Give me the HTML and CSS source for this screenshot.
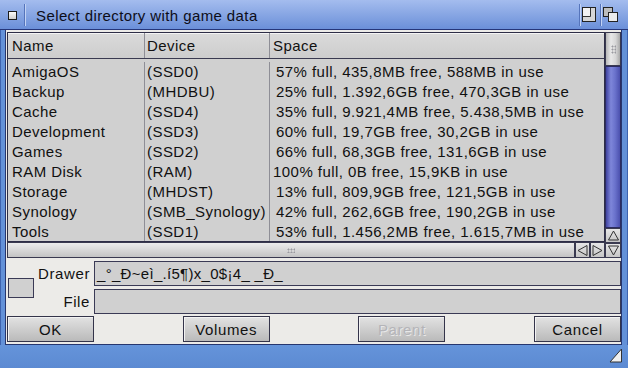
FILE: index.html
```html
<!DOCTYPE html>
<html lang="en">
<head>
  <meta charset="UTF-8" />
  <title>Select directory with game data</title>
  <link rel="stylesheet" href="styles.css">
</head>
<body>

  <div class="window">
    <div class="titlebar">
      <span class="closebox"></span>
      <span class="title-sep sep-left"></span>
      <span class="title">Select directory with game data</span>
      <span class="title-sep"></span>
      <svg class="gadget zoom" width="14" height="15" viewBox="0 0 14 15">
        <rect x="0.5" y="0.5" width="13" height="14" fill="#d6d6d6" stroke="#222"/>
        <rect x="1" y="1" width="7.5" height="8" fill="#f2f2f2"/>
        <path d="M8.5 1 V9.5 H1" fill="none" stroke="#333"/>
      </svg>
      <span class="title-sep sep-depth"></span>
      <svg class="gadget depth" width="15" height="15" viewBox="0 0 15 15">
        <rect x="0.5" y="0.5" width="9" height="9" fill="#bdbdbd" stroke="#222"/>
        <rect x="5.5" y="5.5" width="9" height="9" fill="#ececec" stroke="#222"/>
      </svg>
    </div>

    <div class="body">
      <div class="lister">
        <div class="lister-main">
          <div class="list">
            <div class="list-head">
              <span class="cell c-name">Name</span>
              <span class="cell c-dev">Device</span>
              <span class="cell c-space">Space</span>
            </div>
            <div id="rows" class="rows"></div>
          </div>
          <div class="hbar">
            <div class="hknob"><span class="dots"></span></div>
            <div class="arrow">
              <svg width="13" height="13" viewBox="0 0 13 13"><polygon points="11,1.5 11,11.5 2,6.5" fill="none" stroke="#333"/></svg>
            </div>
            <div class="arrow">
              <svg width="13" height="13" viewBox="0 0 13 13"><polygon points="2,1.5 2,11.5 11,6.5" fill="none" stroke="#333"/></svg>
            </div>
          </div>
        </div>
        <div class="vbar">
          <div class="vknob"><span class="dots"></span></div>
          <div class="vtrack"></div>
          <div class="arrow">
            <svg width="13" height="13" viewBox="0 0 13 13"><polygon points="1.5,11 11.5,11 6.5,2" fill="none" stroke="#333"/></svg>
          </div>
          <div class="arrow">
            <svg width="13" height="13" viewBox="0 0 13 13"><polygon points="1.5,2 11.5,2 6.5,11" fill="none" stroke="#333"/></svg>
          </div>
        </div>
      </div>

      <div class="fields">
        <div class="pickbox"></div>
        <div class="field-rows">
          <div class="field-row">
            <label>Drawer</label>
            <div class="field">_°_Ð~eì_.í5¶)x_0$¡4_ _Ð_</div>
          </div>
          <div class="field-row">
            <label>File</label>
            <div class="field"></div>
          </div>
        </div>
      </div>

      <div class="buttons">
        <button class="btn">OK</button>
        <button class="btn">Volumes</button>
        <button class="btn disabled">Parent</button>
        <button class="btn">Cancel</button>
      </div>
    </div>

    <div class="bottombar">
      <svg class="resize" width="14" height="15" viewBox="0 0 14 15">
        <polygon points="12.5,1 12.5,14 1,14" fill="#f0f0f0" stroke="#333"/>
      </svg>
    </div>
  </div>

  <script>
    const volumes = [
      { name: "AmigaOS", device: "(SSD0)", space: "57% full, 435,8MB free, 588MB in use" },
      { name: "Backup", device: "(MHDBU)", space: "25% full, 1.392,6GB free, 470,3GB in use" },
      { name: "Cache", device: "(SSD4)", space: "35% full, 9.921,4MB free, 5.438,5MB in use" },
      { name: "Development", device: "(SSD3)", space: "60% full, 19,7GB free, 30,2GB in use" },
      { name: "Games", device: "(SSD2)", space: "66% full, 68,3GB free, 131,6GB in use" },
      { name: "RAM Disk", device: "(RAM)", space: "100% full, 0B free, 15,9KB in use" },
      { name: "Storage", device: "(MHDST)", space: "13% full, 809,9GB free, 121,5GB in use" },
      { name: "Synology", device: "(SMB_Synology)", space: "42% full, 262,6GB free, 190,2GB in use" },
      { name: "Tools", device: "(SSD1)", space: "53% full, 1.456,2MB free, 1.615,7MB in use" },
    ];

    const rows = document.getElementById("rows");

    volumes.forEach(v => {
      const div = document.createElement("div");
      div.className = "row";
      // three digit percentages sit a little further left
      const wide = v.space.startsWith("100") ? " wide" : "";
      div.innerHTML = `
        <span class="cell c-name">${v.name}</span>
        <span class="cell c-dev">${v.device}</span>
        <span class="cell c-space${wide}">${v.space}</span>
      `;
      rows.appendChild(div);
    });
  </script>
</body>
</html>
```

FILE: styles.css
```css
* {
  box-sizing: border-box;
}

body {
  margin: 0;
  font-family: "Liberation Sans", Arial, sans-serif;
  color: #111;
}

.window {
  width: 628px;
  height: 368px;
  display: flex;
  flex-direction: column;
  background: #6391d8;
  box-shadow: inset 1px 0 #3d62ae, inset -1px 0 #3d62ae;
}

/* title bar */

.titlebar {
  height: 30px;
  flex: none;
  display: flex;
  align-items: center;
  padding: 0 10px 0 8px;
  background: linear-gradient(#a4bcee, #6b90d9);
  border-bottom: 1px solid #25367a;
}

.closebox {
  width: 9px;
  height: 9px;
  margin-top: 1px;
  background: linear-gradient(#fafafa, #cfcfcf);
  border: 1px solid #1c1c1c;
}

.title-sep {
  width: 2px;
  height: 22px;
  border-left: 1px solid #5574bb;
  border-right: 1px solid #c3d3f4;
}

.sep-left {
  margin-left: 7px;
}

.title {
  flex: 1;
  margin-left: 10px;
  font-size: 15px;
  letter-spacing: 0.4px;
  color: #0d0d18;
  padding-top: 1px;
}

.zoom {
  margin-left: 1px;
}

.sep-depth {
  margin-left: 4px;
}

.depth {
  margin-left: 1px;
}

/* window body */

.body {
  flex: 1;
  margin: 0 6px 0 5px;
  padding: 2px 0 2px 1px;
  display: flex;
  flex-direction: column;
  background: #ecebe8;
  border-left: 1px solid #26366e;
  border-right: 1px solid #26366e;
  border-bottom: 1px solid #26366e;
}

.lister {
  height: 226px;
  display: flex;
}

.lister-main {
  width: 598px;
  display: flex;
  flex-direction: column;
}

.list {
  height: 210px;
  overflow: hidden;
  background: #d0d0d0;
  border: 1px solid #2e2e46;
  font-size: 15px;
  letter-spacing: 0.45px;
}

.list-head {
  height: 26px;
  display: flex;
  align-items: stretch;
  background: linear-gradient(#dadada, #cdcdcd);
  border-bottom: 1px solid #3a3a50;
  box-shadow: inset 0 1px #f4f4f4;
}

.list-head .cell {
  line-height: 25px;
}

.rows {
  padding-top: 3px;
}

.row {
  height: 20px;
  display: flex;
}

.cell {
  white-space: nowrap;
  overflow: hidden;
  line-height: 20px;
}

.c-name {
  width: 137px;
  padding-left: 4px;
  border-right: 1px solid #8e8e96;
}

.c-dev {
  width: 125px;
  padding-left: 2px;
  border-right: 1px solid #8e8e96;
}

.c-space {
  flex: 1;
  padding-left: 6px;
}

.list-head .c-space,
.c-space.wide {
  padding-left: 3px;
}

/* scrollers */

.hbar {
  height: 16px;
  display: flex;
}

.hknob {
  flex: 1;
  display: flex;
  align-items: center;
  justify-content: center;
  background: linear-gradient(#ececec, #c4c4c4);
  border: 1px solid #3a3a50;
}

.dots {
  width: 8px;
  height: 5px;
  background-image: radial-gradient(circle, #9a9aa0 0.8px, transparent 1.2px);
  background-size: 3px 3px;
}

.vknob .dots {
  width: 5px;
  height: 9px;
}

.arrow {
  width: 15px;
  height: 16px;
  display: flex;
  align-items: center;
  justify-content: center;
  background: linear-gradient(#e6e6e6, #c6c6c6);
  border: 1px solid #3a3a50;
}

.vbar {
  width: 16px;
  display: flex;
  flex-direction: column;
}

.vbar .arrow {
  width: 16px;
  height: 15px;
}

.vknob {
  height: 34px;
  display: flex;
  align-items: center;
  justify-content: center;
  background: linear-gradient(to right, #b8b8b8, #e8e8e8 35%, #d6d6d6 70%, #a8a8a8);
  border: 1px solid #3a3a50;
}

.vtrack {
  flex: 1;
  background: linear-gradient(to right, #3f42a0, #7e86da 35%, #6a72cc 65%, #4b50ae);
  border: 1px solid #2c2c60;
}

/* drawer / file */

.fields {
  margin-top: 3px;
  display: flex;
  align-items: center;
}

.pickbox {
  width: 26px;
  height: 20px;
  margin-left: 1px;
  background: #d0d0d0;
  border: 1px solid #3a3a55;
}

.field-rows {
  flex: 1;
  display: flex;
  flex-direction: column;
  gap: 3px;
}

.field-row {
  height: 25px;
  display: flex;
  align-items: center;
}

.field-row label {
  width: 56px;
  text-align: right;
  font-size: 15px;
  letter-spacing: 0.6px;
}

.field {
  flex: 1;
  height: 25px;
  margin-left: 4px;
  padding-left: 2px;
  background: #d0d0d0;
  border: 1px solid #3a3a55;
  font-size: 15px;
  letter-spacing: 0.3px;
  line-height: 23px;
  white-space: nowrap;
}

/* buttons */

.buttons {
  margin-top: 2px;
  display: flex;
  justify-content: space-between;
}

.btn {
  width: 87px;
  height: 26px;
  padding: 0;
  font-family: "Liberation Sans", Arial, sans-serif;
  font-size: 15px;
  letter-spacing: 0.6px;
  color: #111;
  background: linear-gradient(#e2e2e2, #bababa);
  border: 1px solid #34344a;
  box-shadow: inset 1px 1px #f2f2f2;
}

.btn.disabled {
  color: #b4b4b8;
  text-shadow: 1px 1px #e8e8e8;
}

/* bottom border with size gadget */

.bottombar {
  height: 23px;
  flex: none;
  display: flex;
  justify-content: flex-end;
  align-items: flex-start;
  padding: 3px 5px 0 0;
  background: linear-gradient(#6594da, #5c8ad2);
}
```
